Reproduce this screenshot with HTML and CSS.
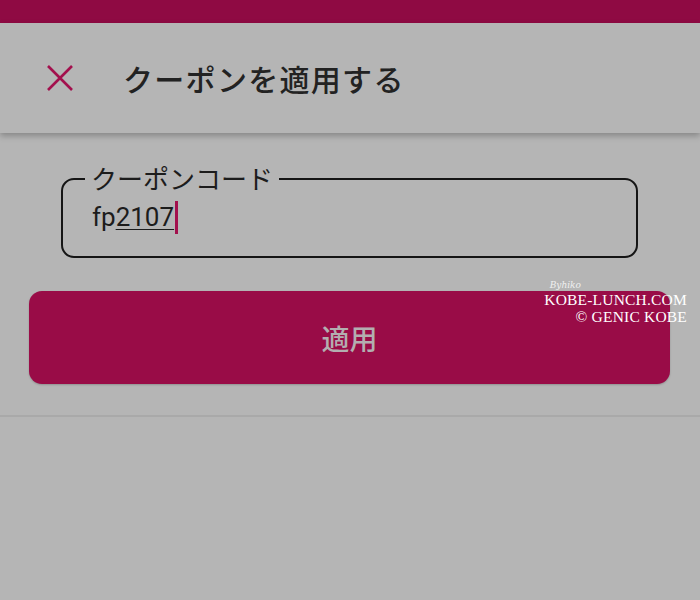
FILE: index.html
```html
<!DOCTYPE html>
<html lang="ja">
<head>
<meta charset="utf-8">
<link rel="stylesheet" href="styles.css">
</head>
<body>
<div class="statusbar"></div>
<header class="header">
  <svg class="close" width="28" height="28" viewBox="0 0 28 28"><path d="M2 2 L26 26 M26 2 L2 26" stroke="#a3104d" stroke-width="2.6" fill="none"/></svg>
  <h1 class="title">クーポンを適用する</h1>
</header>
<main class="content">
  <div class="field">
    <span class="legend">クーポンコード</span>
    <div class="value">fp<span class="under">2107</span><span class="caret"></span></div>
  </div>
  <button class="apply">適用</button>
  <div class="mark">
    <span class="sig">Byhiko</span>
    <span class="mline">KOBE-LUNCH.COM</span>
    <span class="mline">© GENIC KOBE</span>
  </div>
</main>
<div class="divider"></div>
</body>
</html>
```
FILE: styles.css
```css
html, body { margin: 0; padding: 0; }
body {
  width: 700px;
  height: 600px;
  background: #b5b5b5;
  font-family: Roboto, "Noto Sans CJK JP", sans-serif;
  overflow: hidden;
}
.statusbar { height: 23px; background: #8f0a43; }
.header {
  height: 110px;
  background: #b5b5b5;
  display: flex;
  align-items: center;
  box-shadow: 0 3px 6px rgba(0,0,0,0.25);
  position: relative;
}
.close { margin-left: 46px; margin-right: 49px; }
.title {
  margin: 0;
  font-size: 30px;
  font-weight: 500;
  color: #222;
  letter-spacing: 1.3px;
}
.content {
  position: relative;
  padding: 45px 30px 31px 29px;
}
.field {
  position: relative;
  margin: 0 32px;
  border: 2px solid #151515;
  border-radius: 13px;
  height: 80px;
  box-sizing: border-box;
  padding: 20px 0 0 29px;
}
.legend {
  position: absolute;
  left: 22px;
  top: -15px;
  background: #b5b5b5;
  font-size: 26px;
  line-height: 30px;
  color: #1c1c1c;
  padding: 0 6px;
}
.value {
  font-size: 26px;
  color: #1c1c1c;
  line-height: 34px;
  display: flex;
  align-items: center;
}
.under { text-decoration: underline; text-decoration-thickness: 1px; text-underline-offset: 3px; }
.caret { display: inline-block; width: 3px; height: 33px; background: #a3104d; margin-left: 1px; }
.apply {
  display: block;
  width: 641px;
  height: 93px;
  margin-top: 33px;
  background: #990c47;
  border: none;
  border-radius: 13px;
  color: #b3aeb0;
  font-family: "Noto Sans CJK JP", sans-serif;
  font-size: 28px;
  font-weight: 500;
  box-shadow: 0 1px 2px rgba(0,0,0,0.2);
}
.divider { height: 2px; background: #a9a9a9; }
.mark {
  position: absolute;
  right: 13px;
  top: 158px;
  display: flex;
  flex-direction: column;
  align-items: flex-end;
  color: #fff;
  font-family: "Liberation Serif", serif;
  line-height: 17px;
}
.sig {
  position: absolute;
  right: 106px;
  top: -14px;
  font-family: "DejaVu Serif", serif;
  font-style: italic;
  font-size: 9px;
  color: #f0f0f0;
}
.mline { font-size: 15.5px; letter-spacing: 0.2px; }
```
